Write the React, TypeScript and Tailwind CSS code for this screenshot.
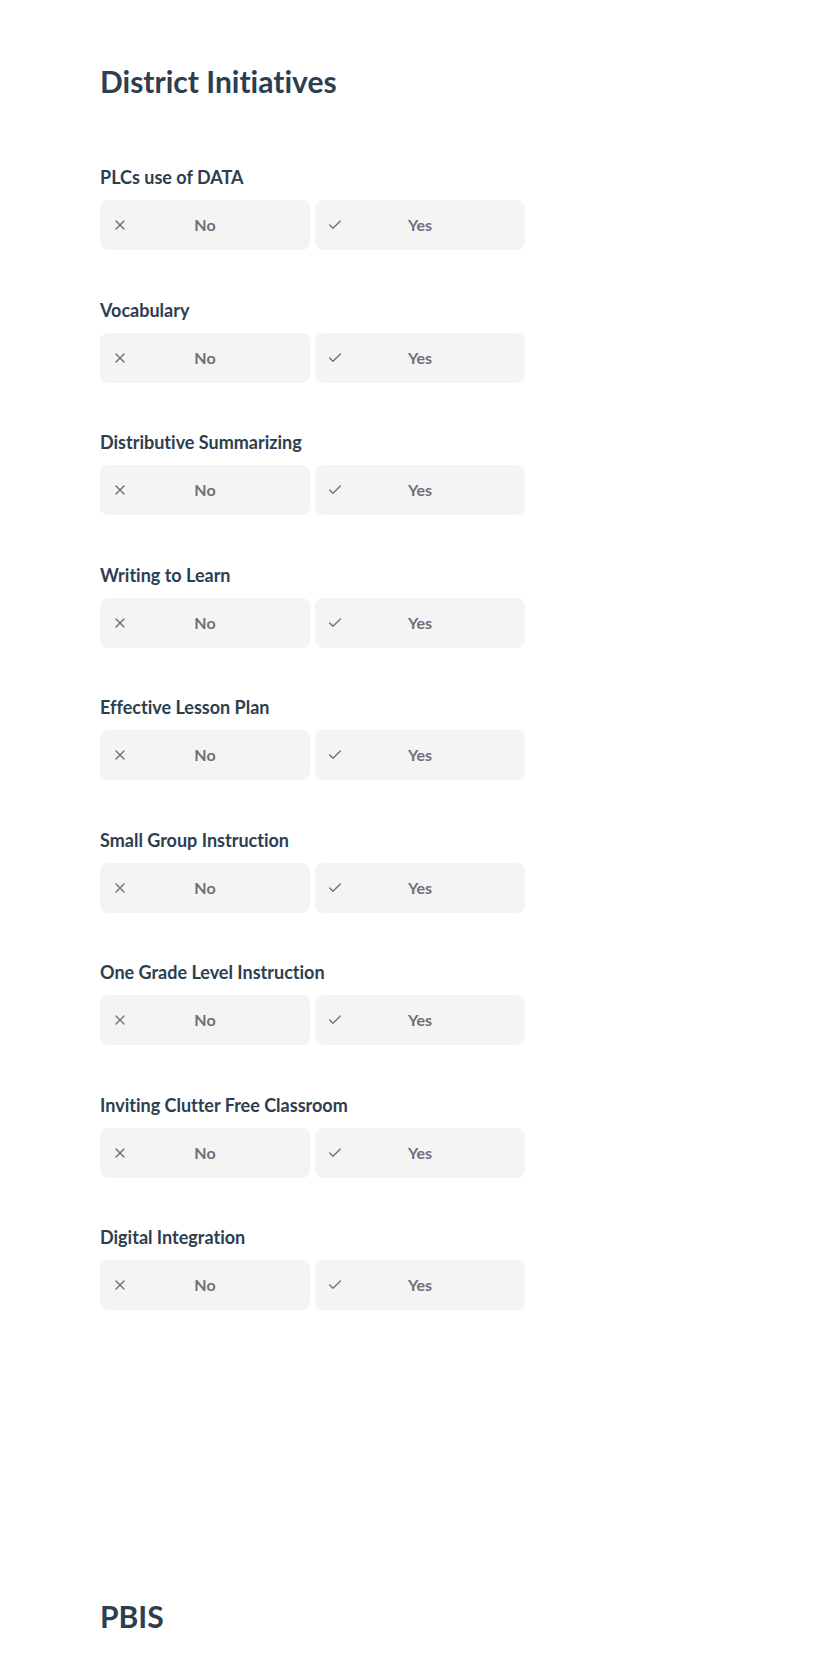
import { X, Check } from 'lucide-react';

const initiatives = [
  'PLCs use of DATA',
  'Vocabulary',
  'Distributive Summarizing',
  'Writing to Learn',
  'Effective Lesson Plan',
  'Small Group Instruction',
  'One Grade Level Instruction',
  'Inviting Clutter Free Classroom',
  'Digital Integration',
];

const Choice = ({ label, icon }: { label: string; icon: 'no' | 'yes' }) => (
  <button className="flex h-[50px] items-center rounded-lg bg-[#f4f4f5] px-3 text-[16px] font-bold text-[#6f6f78]">
    <span className="flex w-4 justify-center">
      {icon === 'no' ? <X size={16} strokeWidth={2} /> : <Check size={16} strokeWidth={2} />}
    </span>
    <span className="flex-1 text-center">{label}</span>
    <span className="w-4" />
  </button>
);

const App = () => {
  return (
    <div
      className="min-h-[1680px] bg-white pl-[100px] pt-[63px] [font-variant-ligatures:none]"
      style={{ fontFamily: 'Lato, "Open Sans", sans-serif' }}
    >
      <h1 className="text-[30px] font-bold leading-[36px] text-[#2c3e50]">District Initiatives</h1>

      <div className="mt-[65px] flex flex-col gap-[46.5px]">
        {initiatives.map(name => (
          <div key={name}>
            <h3 className="mb-[9px] text-[18px] font-bold leading-[27px] text-[#2c3e50]">{name}</h3>
            <div className="grid w-[425px] grid-cols-2 gap-[5px]">
              <Choice label="No" icon="no" />
              <Choice label="Yes" icon="yes" />
            </div>
          </div>
        ))}
      </div>

      <h1 className="mt-[288px] text-[30px] font-bold leading-[36px] text-[#2c3e50]">PBIS</h1>
    </div>
  );
};

export default App;
